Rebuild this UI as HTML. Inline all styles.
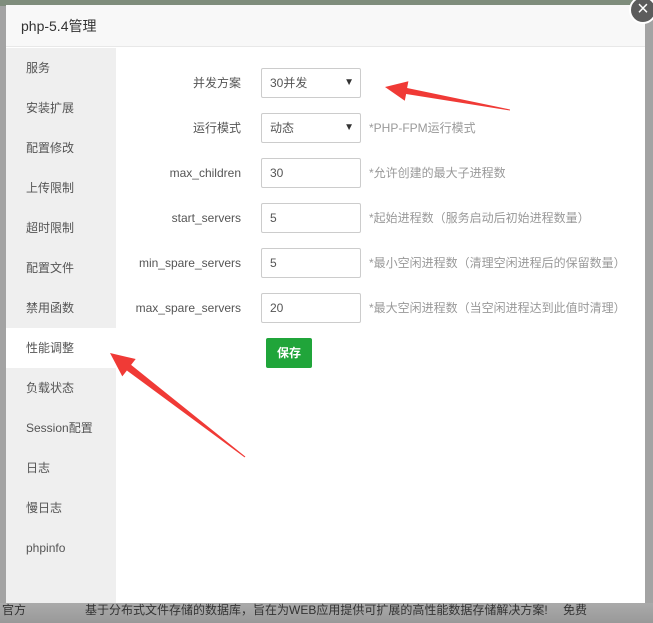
<!DOCTYPE html>
<html><head><meta charset="utf-8"><style>
*{margin:0;padding:0;box-sizing:border-box}
body{width:653px;height:623px;overflow:hidden;position:relative;background:#a3a3a3;font-family:"Liberation Sans","Noto Sans CJK SC",sans-serif;font-size:12px;color:#555}
.top{position:absolute;left:0;top:0;width:653px;height:6px;background:#7f8d7c}
.bot{position:absolute;left:0;top:603px;width:653px;height:20px;background:linear-gradient(#aaa,#999);color:#333;font-size:12px}
.bot span{position:absolute;top:-2px}
.modal{position:absolute;left:6px;top:5px;width:639px;height:598px;background:#fff}
.hdr{height:42px;background:#f8f8f8;border-bottom:1px solid #e8e8e8;font-size:14px;color:#333;line-height:42px;padding-left:15px}
.side{position:absolute;left:0;top:43px;width:110px;height:555px;background:#efefef}
.side div{height:40px;line-height:40px;padding-left:20px;font-size:12px;color:#555}
.side .on{background:#fff}
.row{position:absolute;left:110px;width:529px;height:30px;line-height:30px}
.lbl{position:absolute;right:404px;top:0;color:#555;white-space:nowrap}
.inp{position:absolute;left:145px;top:0;width:100px;height:30px;border:1px solid #ccc;border-radius:2px;padding-left:8px;line-height:28px;color:#555}
.inp b{position:absolute;right:6px;top:0;font-size:10px;font-weight:normal;color:#333}
.tip{position:absolute;left:253px;top:0;color:#999;white-space:nowrap}
.btn{position:absolute;left:260px;top:333px;width:46px;height:30px;background:#20a53a;border-radius:2px;color:#fff;font-weight:bold;text-align:center;line-height:30px}
.x{position:absolute;left:629px;top:-4px;width:28px;height:28px;border-radius:50%;background:#5c5c5c;border:2px solid #fff;color:#fff;font-size:20px;text-align:center;line-height:23px}
</style></head><body>
<div class="top"></div>
<div class="bot"><span style="left:2px">官方</span><span style="left:85px">基于分布式文件存储的数据库，旨在为WEB应用提供可扩展的高性能数据存储解决方案!</span><span style="left:563px">免费</span></div>
<div class="modal">
<div class="hdr">php-5.4管理</div>
<div class="side">
<div>服务</div><div>安装扩展</div><div>配置修改</div><div>上传限制</div><div>超时限制</div><div>配置文件</div><div>禁用函数</div><div class="on">性能调整</div><div>负载状态</div><div>Session配置</div><div>日志</div><div>慢日志</div><div>phpinfo</div>
</div>
<div class="row" style="top:63px"><span class="lbl">并发方案</span><div class="inp">30并发<b>▼</b></div></div>
<div class="row" style="top:108px"><span class="lbl">运行模式</span><div class="inp">动态<b>▼</b></div><span class="tip">*PHP-FPM运行模式</span></div>
<div class="row" style="top:153px"><span class="lbl">max_children</span><div class="inp">30</div><span class="tip">*允许创建的最大子进程数</span></div>
<div class="row" style="top:198px"><span class="lbl">start_servers</span><div class="inp">5</div><span class="tip">*起始进程数（服务启动后初始进程数量）</span></div>
<div class="row" style="top:243px"><span class="lbl">min_spare_servers</span><div class="inp">5</div><span class="tip">*最小空闲进程数（清理空闲进程后的保留数量）</span></div>
<div class="row" style="top:288px"><span class="lbl">max_spare_servers</span><div class="inp">20</div><span class="tip">*最大空闲进程数（当空闲进程达到此值时清理）</span></div>
<div class="btn">保存</div>
</div>
<div class="x">×</div>
<svg width="653" height="623" style="position:absolute;left:0;top:0">
<polygon fill="#f03a36" points="385,87 408.4,81.2 407.1,88 510,109.5 510,110.5 406.1,94 404.8,100.8"/>
<polygon fill="#f03a36" points="110,353 135.7,359 131.1,364.9 245.4,456.6 244.6,457.4 126.9,370.5 122.3,376.4"/>
</svg>
</body></html>
